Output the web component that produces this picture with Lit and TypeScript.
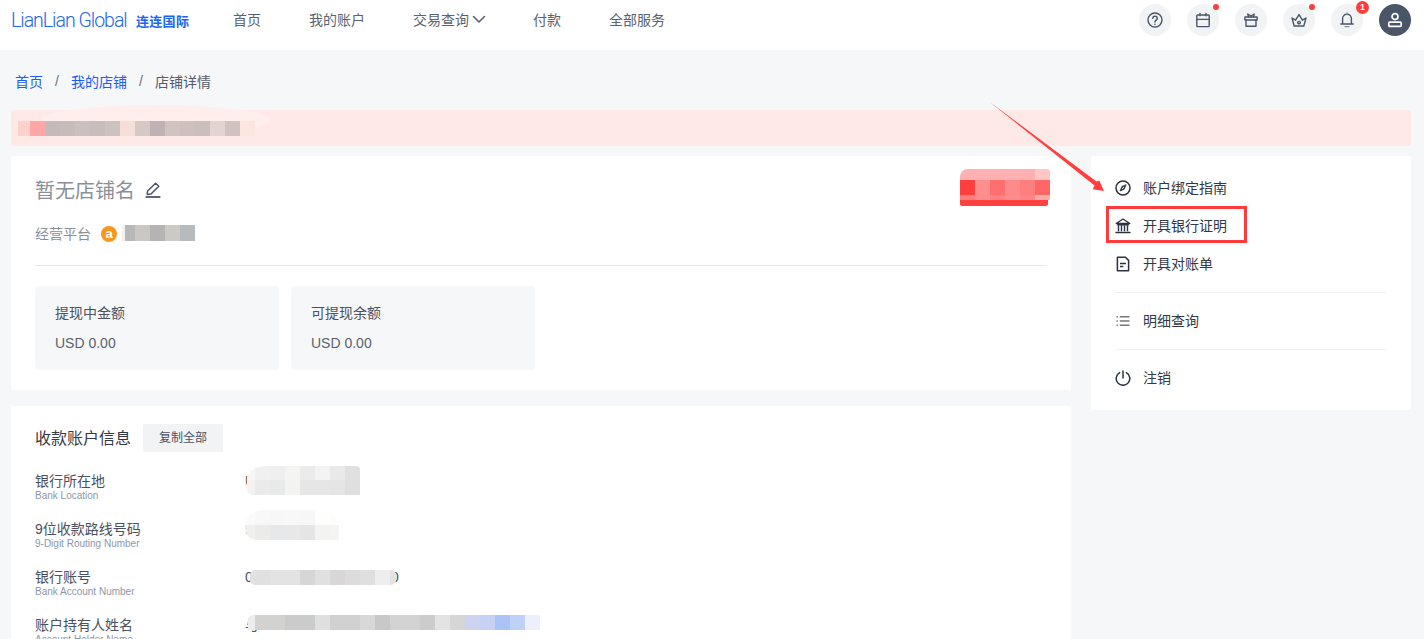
import { LitElement, html, css, svg } from "lit";
import { customElement } from "lit/decorators.js";

// redacted areas in the screenshot, rows of colored cells
type Mosaic = { cols: number[]; rows: number[]; colors: string[][] };

const same = (n: number, w: number) => Array(n).fill(w);

const alertMosaic: Mosaic = {
  cols: [12, ...same(15, 15)],
  rows: [15],
  colors: [["#ffd0cc", "#ffa6a6", "#c4bab9", "#c7bcba", "#cbc0c0", "#c9bdbc", "#ccc2c1", "#f5dfd8", "#d6c8c5", "#bfb2b4", "#d0c3c0", "#cdc0be", "#cbbfbb", "#e3d4d1", "#cfc2bf", "#fde5e2"]],
};
const statusMosaic: Mosaic = {
  cols: same(6, 15),
  rows: [11, 15, 5],
  colors: [
    ["#ffb0b0", "#ffb0b0", "#ffb0b0", "#ffb0b0", "#ffb0b0", "#ffc4c4"],
    ["#ff3f3f", "#ff8f8f", "#ff6f6f", "#ff8a8a", "#ff7f7f", "#ff6666"],
    ["#ff7c7c", "#ff8c8c", "#ff8080", "#ff8c8c", "#ff8484", "#ffa8a8"],
  ],
};
const shopMosaic: Mosaic = {
  cols: [3, 10, 15, 15, 15, 15],
  rows: [16],
  colors: [["#f2f2f0", "#b8b8b6", "#c9c8c4", "#b4b4b4", "#cbcac5", "#b8bbbe"]],
};
const locationMosaic: Mosaic = {
  cols: [8, ...same(7, 15)],
  rows: [14, 15],
  colors: [
    ["#f6f6f6", "#f0f0f0", "#efefef", "#f4f4f3", "#ebebeb", "#f3f3f3", "#e9e9e9", "#e1e0e1"],
    ["#f3f3f3", "#ebebeb", "#e8e9e9", "#f3f3f1", "#e6e6e6", "#e6e6e6", "#e5e5e5", "#e0dfe0"],
  ],
};
const routingMosaic: Mosaic = {
  cols: [10, 15, 15, 15, 15, 15, 9],
  rows: [15, 15],
  colors: [
    ["#fafafa", "#f8f8f8", "#f7f7f7", "#f8f8f8", "#f7f7f7", "#fefefd", "#fdfdfd"],
    ["#efefed", "#ebebea", "#e6e8ea", "#e8e8e8", "#e5e5e5", "#f3f3f1", "#f4f4f3"],
  ],
};
const accountMosaic: Mosaic = {
  cols: [5, ...same(9, 15), 6],
  rows: [15],
  colors: [["#e2e2e2", "#e0e0e0", "#e3e3e3", "#e3e3e3", "#d6d6d6", "#e0e0e0", "#d8d6d7", "#dcdcdc", "#dfdfdf", "#eeeeee", "#e3e3e3"]],
};
const holderMosaic: Mosaic = {
  cols: [7, ...same(19, 15)],
  rows: [15],
  colors: [["#ededed", "#d2d2d0", "#d2d2d0", "#cccbcb", "#c9ccca", "#dfdfdf", "#d2d1d1", "#d2d1d1", "#d8d8d8", "#c9c8c8", "#d3d3d3", "#d3d3d3", "#cccccc", "#e3e3e3", "#d6d6d6", "#ccd4f0", "#c5d1f5", "#a9c4f5", "#c0d1f8", "#ecf0fc"]],
};

const ic = (content: unknown, size = 16) =>
  html`<svg width=${size} height=${size} viewBox="0 0 16 16" fill="none" stroke="currentColor" stroke-width="1.4" stroke-linecap="round" stroke-linejoin="round">${content}</svg>`;

const icons = {
  help: svg`<circle cx="8" cy="8" r="7"/><path d="M5.8 6.3a2.2 2.2 0 1 1 3.4 1.9c-.8.5-1.2.9-1.2 1.8" stroke-width="1.5"/><path d="M8 12.2v.1" stroke-width="1.6"/>`,
  calendar: svg`<rect x="1.8" y="3" width="12.4" height="11.6" rx=".8"/><path d="M1.8 7.4h12.4M5 1.4v2.4M11 1.4v2.4"/>`,
  gift: svg`<rect x="1.8" y="5" width="12.4" height="3" rx=".6"/><path d="M3 8v6.2h10V8M5.4 5 4.8 2l3.2 2 3.2-2-.6 3M8 4.6V5"/>`,
  crown: svg`<path d="M3.2 14 1 6l3.6 2.2L8 2.6l3.4 5.6L15 6l-2.2 8z"/><path d="M6.6 10.6a1.4 1.2 0 1 0 2.8 0 1.4 1.2 0 1 0-2.8 0"/>`,
  bell: svg`<path d="M3.6 12V6.6a4.4 4.4 0 0 1 8.8 0V12zM1.8 12h12.4"/><path d="M8 1v1.2M6 14.6h4" stroke="#8a8f99"/>`,
  user: svg`<circle cx="8" cy="4.6" r="3" stroke-width="1.7"/><rect x="1.8" y="10.2" width="12.4" height="4.2" rx="1" stroke-width="1.7"/>`,
  edit: svg`<path d="M2.2 12.4 2.6 9l8-7.8 3.2 3L6 12z" stroke-width="1.5"/><path d="M.6 15h14.8" stroke-width="1.8" stroke-linecap="butt"/>`,
  compass: svg`<circle cx="8" cy="8" r="7" stroke-width="1.5"/><path d="M11 5 9.2 9.2 5 11l1.8-4.2z" fill="currentColor" stroke-width=".8"/><path d="M7.3 8.7 8.7 7.3" stroke="#fff" stroke-width="1"/>`,
  bank: svg`<path d="M1.2 5.5 8 1l6.8 4.5zM2.6 6.8h10.8" stroke-width="1.3"/><path d="M3.5 7.2v6M6.5 7.2v6M9.5 7.2v6M12.5 7.2v6" stroke-width="1.4" stroke-linecap="butt"/><path d="M1 14.5h14" stroke-width="1.4"/>`,
  doc: svg`<path d="M2.4 1.2h8l3.2 3.2v10.4H2.4z" stroke-width="1.5"/><path d="M5 7.5h6M5 10.5h3.4" stroke-width="1.5" stroke-linecap="butt"/>`,
  list: svg`<g stroke="#77787e" stroke-linecap="butt" stroke-width="1.4"><path d="M4.8 3.7h9.7M4.8 8h9.7M4.8 12.3h9.7M1.5 3.7h1.4M1.5 8h1.4M1.5 12.3h1.4"/></g>`,
  power: svg`<path d="M8 1v7" stroke-width="1.5"/><path d="M4.6 2.6a6.8 6.8 0 1 0 6.8 0" stroke-width="1.5"/>`,
};

@customElement("app-root")
export class AppRoot extends LitElement {
  static styles = css`
    :host {
      display: block;
      height: 639px;
      overflow: hidden;
      position: relative;
      background: #f6f7f9;
      font-family: "Liberation Sans", "Noto Sans CJK SC", sans-serif;
      font-size: 14px;
      color: #4a5160;
    }
    .header {
      height: 50px;
      box-sizing: border-box;
      background: #fff;
      display: flex;
      align-items: center;
      padding: 0 13px 10px 11px;
    }
    .logo {
      display: flex;
      align-items: center;
      width: 222px;
      color: #1b66f0;
    }
    .logo-en {
      font-family: "Roboto", sans-serif;
      font-weight: 300;
      font-size: 19.5px;
      letter-spacing: -1px;
      width: 125px;
      white-space: nowrap;
    }
    .logo-cn {
      font-family: "Noto Sans CJK SC", sans-serif;
      font-weight: 700;
      font-size: 13px;
      letter-spacing: 0.3px;
    }
    .nav {
      display: flex;
      gap: 48px;
      color: #5a6270;
      flex: 1;
    }
    .nav span {
      display: flex;
      align-items: center;
      gap: 2px;
      padding-bottom: 2px;
    }
    .nav svg {
      margin-right: -2px;
    }
    .tools {
      display: flex;
      gap: 16px;
    }
    .tool {
      width: 32px;
      height: 32px;
      border-radius: 50%;
      background: #f2f3f5;
      color: #4a5568;
      display: flex;
      align-items: center;
      justify-content: center;
      position: relative;
    }
    .tool.avatar {
      background: #4a5568;
      color: #fff;
    }
    .dot {
      position: absolute;
      top: 0;
      right: 0;
      width: 6px;
      height: 6px;
      border-radius: 50%;
      background: #ff3b3b;
    }
    .count {
      position: absolute;
      top: -3px;
      right: -6px;
      width: 13px;
      height: 13px;
      border-radius: 50%;
      background: #ff3b3b;
      color: #fff;
      font-size: 9px;
      font-weight: 700;
      line-height: 13px;
      text-align: center;
    }
    .page {
      padding: 0 13px 0 11px;
    }
    .crumbs {
      height: 60px;
      display: flex;
      align-items: center;
      padding: 1px 0 0 4px;
      box-sizing: border-box;
      color: #555c68;
    }
    .crumbs a {
      color: #1a5cff;
    }
    .crumbs i {
      font-style: normal;
      width: 28px;
      text-align: center;
      color: #6b7280;
    }
    .alert {
      height: 36px;
      background: #ffe9e7;
      border-radius: 2px;
      margin-bottom: 10px;
      display: flex;
      align-items: center;
      padding-left: 7px;
      position: relative;
    }
    .alert .smudge {
      position: absolute;
      left: 30px;
      top: -5px;
      width: 230px;
      height: 30px;
      border-radius: 50%;
      background: #ffeeec;
    }
    .alert .mosaic {
      position: relative;
    }
    .columns {
      display: grid;
      grid-template-columns: 1060px 320px;
      gap: 20px;
      align-items: start;
    }
    .left {
      display: flex;
      flex-direction: column;
      gap: 16px;
    }
    .card {
      background: #fff;
      border-radius: 2px;
      position: relative;
    }
    .shop {
      padding: 24px 24px 20px;
    }
    .shop-title {
      display: flex;
      align-items: center;
      gap: 10px;
      height: 20px;
      font-size: 20px;
      color: #8a8f99;
    }
    .shop-title span {
      padding-bottom: 2px;
    }
    .shop-title svg {
      color: #4a5568;
    }
    .status {
      position: absolute;
      top: 13px;
      left: 949px;
    }
    .status .mosaic {
      overflow: hidden;
      border-radius: 8px 4px 0 0;
    }
    .status-bar {
      width: 88px;
      height: 6px;
      background: #ff4040;
      border-radius: 0 0 2px 2px;
    }
    .platform {
      margin-top: 24px;
      height: 20px;
      display: flex;
      align-items: center;
      color: #8a8f99;
    }
    .platform > span:first-child {
      padding-bottom: 2px;
    }
    .platform .mosaic {
      margin-bottom: 2px;
    }
    .platform-mark {
      width: 16px;
      height: 16px;
      margin: 0 5px 0 10px;
      border-radius: 50%;
      background: #f7971e;
      color: #fff;
      font-size: 13px;
      font-weight: 700;
      line-height: 15px;
      text-align: center;
    }
    .rule {
      height: 1px;
      background: #e6e7ea;
      margin: 21px 0 20px;
    }
    .stats {
      display: flex;
      gap: 12px;
    }
    .stat {
      width: 244px;
      height: 84px;
      box-sizing: border-box;
      padding: 17px 20px 0;
      background: #f6f7f9;
      border-radius: 4px;
      line-height: 20px;
    }
    .stat div + div {
      margin-top: 10px;
      color: #5a6270;
    }
    .account {
      padding: 18px 24px 0;
      height: 260px;
      box-sizing: border-box;
    }
    .account-head {
      display: flex;
      align-items: center;
      gap: 12px;
      margin-bottom: 19px;
    }
    .account-head h2 {
      margin: 0;
      padding-bottom: 3px;
      font-size: 16px;
      font-weight: 400;
      color: #333842;
    }
    .copy {
      width: 80px;
      height: 28px;
      background: #f2f3f5;
      border-radius: 2px;
      font-size: 12px;
      line-height: 28px;
      text-align: center;
      color: #4a5160;
    }
    .rows {
      display: flex;
      flex-direction: column;
      gap: 18px;
    }
    .info {
      display: flex;
    }
    .info-label {
      width: 210px;
      line-height: 20px;
    }
    .info-label small {
      display: block;
      font-size: 10px;
      line-height: 10px;
      color: #8d96a8;
    }
    .info-value {
      position: relative;
      line-height: 20px;
      color: #5a5050;
      white-space: nowrap;
    }
    .info-value .mosaic {
      position: absolute;
    }
    .m-location {
      left: 2px;
      top: -5px;
      overflow: hidden;
      border-radius: 20px 4px 0 5px / 12px 4px 0 5px;
    }
    .m-routing {
      left: 0;
      top: -9px;
      overflow: hidden;
      border-radius: 20px 22px 2px 12px / 14px 14px 2px 12px;
    }
    .m-account {
      left: 5px;
      top: 3px;
      overflow: hidden;
      border-radius: 5px;
    }
    .m-holder {
      left: 3px;
      top: 0;
      overflow: hidden;
      border-radius: 5px 0 0 0;
    }
    .digits {
      letter-spacing: -0.1px;
      color: #4a5160;
    }
    .menu {
      padding: 13px 24px;
    }
    .menu-item {
      height: 38px;
      display: flex;
      align-items: center;
      gap: 12px;
      color: #333842;
    }
    .menu-item span {
      padding-bottom: 2px;
    }
    .menu-item svg {
      color: #2c3240;
      flex: none;
    }
    .menu-rule {
      height: 1px;
      background: #f0f1f3;
      margin: 9px 0;
    }
    .mosaic {
      display: grid;
    }
    .overlay {
      position: absolute;
      left: 0;
      top: 0;
      pointer-events: none;
    }
    .callout {
      position: absolute;
      left: 1106px;
      top: 206px;
      width: 141px;
      height: 37px;
      box-sizing: border-box;
      border: 3px solid #ff3b3b;
    }
  `;

  private mosaic(m: Mosaic, cls = "") {
    return html`<div
      class="mosaic ${cls}"
      style="grid-template-columns:${m.cols.map((c) => c + "px").join(" ")};grid-template-rows:${m.rows.map((r) => r + "px").join(" ")}"
    >
      ${m.colors.flat().map((c) => html`<div style="background:${c}"></div>`)}
    </div>`;
  }

  private info(cn: string, en: string, value: unknown) {
    return html`<div class="info">
      <div class="info-label">${cn}<small>${en}</small></div>
      <div class="info-value">${value}</div>
    </div>`;
  }

  render() {
    return html`
      <header class="header">
        <div class="logo">
          <span class="logo-en">LianLian Global</span>
          <span class="logo-cn">连连国际</span>
        </div>
        <nav class="nav">
          <span>首页</span>
          <span>我的账户</span>
          <span>交易查询 ${ic(svg`<path d="M2.5 5.5 8 11l5.5-5.5" stroke-width="1.6"/>`)}</span>
          <span>付款</span>
          <span>全部服务</span>
        </nav>
        <div class="tools">
          <div class="tool">${ic(icons.help)}</div>
          <div class="tool">${ic(icons.calendar)}<b class="dot"></b></div>
          <div class="tool">${ic(icons.gift)}</div>
          <div class="tool">${ic(icons.crown)}<b class="dot"></b></div>
          <div class="tool">${ic(icons.bell)}<b class="count">1</b></div>
          <div class="tool avatar">${ic(icons.user)}</div>
        </div>
      </header>

      <div class="page">
        <div class="crumbs">
          <a>首页</a><i>/</i><a>我的店铺</a><i>/</i><span>店铺详情</span>
        </div>
        <div class="alert">
          <div class="smudge"></div>
          ${this.mosaic(alertMosaic)}
        </div>
        <div class="columns">
          <div class="left">
            <section class="card shop">
              <div class="shop-title"><span>暂无店铺名</span> ${ic(icons.edit)}</div>
              <div class="status">
                ${this.mosaic(statusMosaic)}
                <div class="status-bar"></div>
              </div>
              <div class="platform">
                <span>经营平台</span>
                <span class="platform-mark">a</span>
                ${this.mosaic(shopMosaic)}
              </div>
              <div class="rule"></div>
              <div class="stats">
                <div class="stat"><div>提现中金额</div><div>USD 0.00</div></div>
                <div class="stat"><div>可提现余额</div><div>USD 0.00</div></div>
              </div>
            </section>
            <section class="card account">
              <div class="account-head">
                <h2>收款账户信息</h2>
                <div class="copy">复制全部</div>
              </div>
              <div class="rows">
                ${this.info("银行所在地", "Bank Location", html`U${this.mosaic(locationMosaic, "m-location")}`)}
                ${this.info("9位收款路线号码", "9-Digit Routing Number", html`1${this.mosaic(routingMosaic, "m-routing")}`)}
                ${this.info("银行账号", "Bank Account Number", html`<span class="digits">00000000000000000000</span>${this.mosaic(accountMosaic, "m-account")}`)}
                ${this.info("账户持有人姓名", "Account Holder Name", html`与${this.mosaic(holderMosaic, "m-holder")}`)}
              </div>
            </section>
          </div>
          <aside class="card menu">
            <div class="menu-item">${ic(icons.compass)}<span>账户绑定指南</span></div>
            <div class="menu-item">${ic(icons.bank)}<span>开具银行证明</span></div>
            <div class="menu-item">${ic(icons.doc)}<span>开具对账单</span></div>
            <div class="menu-rule"></div>
            <div class="menu-item">${ic(icons.list)}<span>明细查询</span></div>
            <div class="menu-rule"></div>
            <div class="menu-item">${ic(icons.power)}<span>注销</span></div>
          </aside>
        </div>
      </div>

      <svg class="overlay" width="1424" height="639">
        <polygon fill="#ff3f3f" points="989,101.5 1096.5,181.5 1099.3,180.5 1104,191 1092.7,189.3 1094.5,185.5" />
      </svg>
      <div class="callout"></div>
    `;
  }
}
